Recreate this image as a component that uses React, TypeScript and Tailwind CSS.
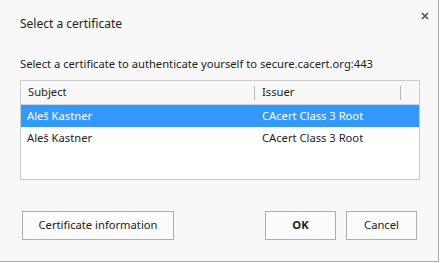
import React from 'react'

const rows = [
  { subject: 'Aleš Kastner', issuer: 'CAcert Class 3 Root', selected: true },
  { subject: 'Aleš Kastner', issuer: 'CAcert Class 3 Root', selected: false },
]

const App: React.FC = () => {
  return (
    <div className="h-[263px] w-[441px] bg-white" style={{ fontFamily: '"Noto Sans", "Open Sans", sans-serif' }}>
      <div className="relative flex h-[262px] w-[439px] flex-col border-b border-r border-[#a9a9a9] bg-[#f8f8f8] text-[#222]">
        <button className="absolute right-[9px] top-[12px] text-[#555]">
          <svg width="8" height="8" viewBox="0 0 8 8">
            <path d="M1 1L7 7M7 1L1 7" stroke="currentColor" strokeWidth="1.7" />
          </svg>
        </button>

        <h1 className="ml-5 mt-[15px] text-[12px] leading-[18px]">Select a certificate</h1>
        <p className="ml-5 mt-[23px] text-[11.2px] leading-[16px]">
          Select a certificate to authenticate yourself to secure.cacert.org:443
        </p>

        <div className="ml-5 mt-[8px] h-[100px] w-[400px] border border-[#c9ccc9] bg-white text-[11.2px]">
          <div className="flex h-[24px] items-center border-b border-[#d5d5d5] bg-[#f8f8f8]">
            <div className="flex h-[14px] w-[234px] items-center border-r border-[#b5b5b5] pl-[7px]">Subject</div>
            <div className="flex h-[14px] w-[146px] items-center border-r border-[#b5b5b5] pl-[7px]">Issuer</div>
          </div>
          {rows.map((row, i) => (
            <div
              key={i}
              className={`flex h-[22px] items-center ${row.selected ? 'bg-[#3399ff] text-white' : 'text-[#222]'}`}
            >
              <span className="w-[234px] pl-[6px]">{row.subject}</span>
              <span className="pl-[7px]">{row.issuer}</span>
            </div>
          ))}
        </div>

        <div className="mt-[31px] flex items-center pl-[22px] pr-[21px] text-[11.2px]">
          <button className="h-[29px] w-[152px] border border-[#adadad] bg-[#fbfbfb]">Certificate information</button>
          <div className="flex-1" />
          <button className="h-[29px] w-[71px] border border-[#adadad] bg-[#fbfbfb] font-bold">OK</button>
          <button className="ml-[10px] h-[29px] w-[71px] border border-[#adadad] bg-[#fbfbfb]">Cancel</button>
        </div>
      </div>
    </div>
  )
}

export default App
